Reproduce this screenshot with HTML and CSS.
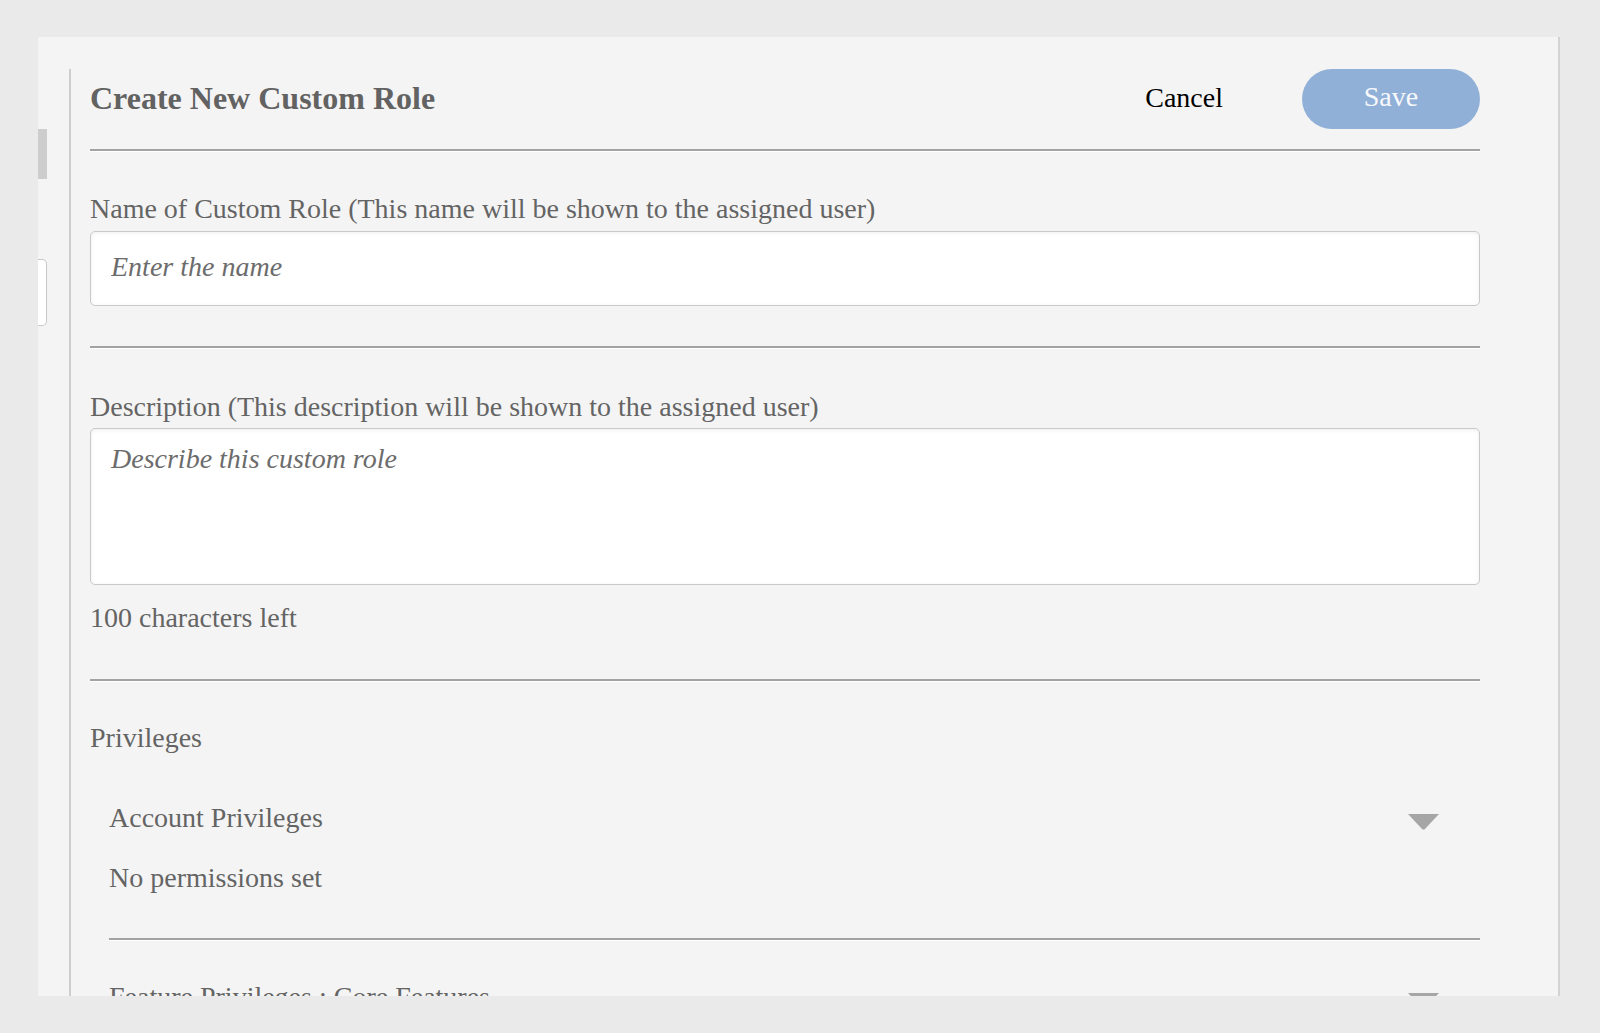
FILE: index.html
```html
<!DOCTYPE html>
<html lang="en">
<head>
<meta charset="utf-8">
<title>Create New Custom Role</title>
<link rel="stylesheet" href="styles.css">
</head>
<body>
<div class="panel">
  <div class="side">
    <div class="side-thumb"></div>
    <div class="side-box"></div>
  </div>
  <div class="main">
    <div class="header">
      <h1 class="title">Create New Custom Role</h1>
      <div class="actions">
        <button class="btn-cancel" type="button">Cancel</button>
        <button class="btn-save" type="button">Save</button>
      </div>
    </div>
    <hr class="rule rule-head">

    <label class="field-label label-name" for="roleName">Name of Custom Role (This name will be shown to the assigned user)</label>
    <input class="text-input" id="roleName" type="text" placeholder="Enter the name">
    <hr class="rule rule-after-name">

    <label class="field-label label-desc" for="roleDesc">Description (This description will be shown to the assigned user)</label>
    <textarea class="text-area" id="roleDesc" placeholder="Describe this custom role"></textarea>
    <div class="counter">100 characters left</div>
    <hr class="rule rule-after-desc">

    <div class="section-title">Privileges</div>

    <div class="priv-group">
      <div class="priv-head">
        <span class="priv-name">Account Privileges</span>
        <svg class="caret" width="31" height="16" viewBox="0 0 31 16"><polygon points="0,0 31,0 16.5,15.5 14.5,15.5" fill="#a6a6a6"/></svg>
      </div>
      <div class="priv-status">No permissions set</div>
      <hr class="rule rule-group">
      <div class="priv-head priv-head-next">
        <span class="priv-name">Feature Privileges : Core Features</span>
        <svg class="caret" width="31" height="16" viewBox="0 0 31 16"><polygon points="0,0 31,0 16.5,15.5 14.5,15.5" fill="#a6a6a6"/></svg>
      </div>
    </div>
  </div>
</div>
</body>
</html>
```

FILE: styles.css
```css
html, body {
  margin: 0;
  padding: 0;
}

body {
  background: #eaeaea;
  font-family: "Liberation Serif", "Times New Roman", serif;
  color: #646464;
}

.panel {
  box-sizing: border-box;
  margin: 37px 0 0 38px;
  width: 1522px;
  height: 959px;
  background: #f4f4f4;
  border-right: 2px solid #d3d3d3;
  overflow: hidden;
  display: flex;
}

.side {
  width: 31px;
  flex: 0 0 31px;
  display: flex;
  flex-direction: column;
}

.side-thumb {
  margin-top: 92px;
  width: 9px;
  height: 50px;
  flex-shrink: 0;
  background: #cdcdcd;
}

.side-box {
  box-sizing: border-box;
  margin-top: 80px;
  width: 9px;
  height: 67px;
  flex-shrink: 0;
  background: #ffffff;
  border: 1px solid #c9c9c9;
  border-left: 0;
  border-radius: 0 5px 5px 0;
}

.main {
  flex: 1;
  margin-top: 32px;
  border-left: 2px solid #cecece;
  padding: 0 78px 0 19px;
  display: flex;
  flex-direction: column;
}

.main > *,
.priv-group > * {
  flex-shrink: 0;
}

.header {
  height: 60px;
  display: flex;
  align-items: center;
  justify-content: space-between;
}

.title {
  margin: 0 0 2px 0;
  font-size: 32px;
  line-height: 36px;
  font-weight: bold;
  color: #626262;
}

.actions {
  display: flex;
  align-items: center;
  gap: 79px;
}

.btn-cancel {
  margin: 0 0 3px 0;
  padding: 0;
  border: 0;
  background: none;
  font-family: inherit;
  font-size: 28px;
  line-height: 32px;
  color: #000;
  cursor: pointer;
}

.btn-save {
  box-sizing: border-box;
  width: 178px;
  height: 60px;
  padding: 0 0 4px 0;
  border: 0;
  border-radius: 30px;
  background: #91b0d7;
  color: #f7f9fc;
  font-family: inherit;
  font-size: 28px;
  line-height: 32px;
  cursor: pointer;
}

.rule {
  height: 0;
  margin: 0;
  border: 0;
  border-top: 2px solid #a2a2a2;
  border-bottom: 1px solid #ffffff;
}

.rule-head { margin-top: 20px; }
.rule-after-name { margin-top: 40px; }
.rule-after-desc { margin-top: 45px; }

.field-label {
  display: block;
  font-size: 28px;
  line-height: 32px;
  color: #646464;
  margin-bottom: 6px;
}

.label-name { margin-top: 41px; }
.label-desc { margin-top: 42px; margin-bottom: 5px; }

.text-input,
.text-area {
  box-sizing: border-box;
  display: block;
  width: 100%;
  margin: 0;
  background: #ffffff;
  border: 1px solid #c9c9c9;
  border-radius: 5px;
  box-shadow: inset 0 1px 4px rgba(0, 0, 0, 0.07);
  font-family: inherit;
  font-size: 28px;
  color: #555;
  outline: none;
}

.text-input {
  height: 75px;
  padding: 0 20px 3px 20px;
}

.text-area {
  height: 157px;
  padding: 13px 20px 11px 20px;
  line-height: 33px;
  resize: none;
}

.text-input::placeholder,
.text-area::placeholder {
  font-style: italic;
  color: #6c6c6c;
  opacity: 1;
}

.counter {
  margin-top: 17px;
  font-size: 28px;
  line-height: 32px;
  color: #646464;
}

.section-title {
  margin-top: 40px;
  font-size: 28px;
  line-height: 32px;
  color: #646464;
}

.priv-group {
  margin-left: 19px;
  display: flex;
  flex-direction: column;
}

.priv-head {
  margin-top: 48px;
  display: flex;
  align-items: flex-start;
  justify-content: space-between;
  padding-right: 41px;
}

.priv-head-next { margin-top: 40px; }

.priv-name {
  font-size: 28px;
  line-height: 32px;
  color: #646464;
}

.caret {
  display: block;
  margin-top: 12px;
}

.priv-status {
  margin-top: 28px;
  font-size: 28px;
  line-height: 32px;
  color: #646464;
}

.rule-group { margin-top: 44px; }
```
